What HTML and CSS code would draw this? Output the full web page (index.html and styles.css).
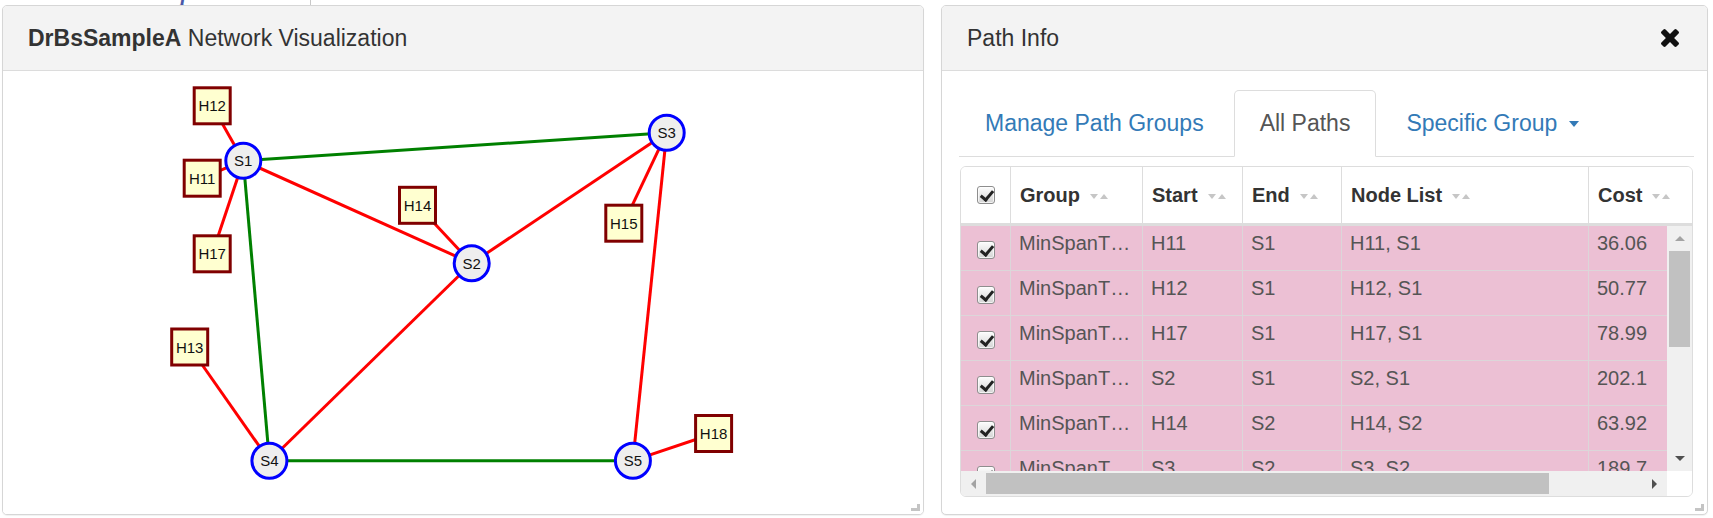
FILE: index.html
```html
<!DOCTYPE html>
<html lang="en">
<head>
<meta charset="utf-8">
<title>DrBsSampleA Network Visualization</title>
<link rel="stylesheet" href="styles.css">
</head>
<body>
<div class="logo-strip"><div class="logo"><span>DrBsSampleA Network</span></div></div>
<div class="main">
  <section class="panel panel-graph">
    <header class="panel-heading">
      <h3 class="panel-title"><b>DrBsSampleA</b> Network Visualization</h3>
    </header>
    <div class="graph-body">
      <svg class="graph" width="920" height="443" viewBox="3 71 920 443" xmlns="http://www.w3.org/2000/svg">
        <g class="edges">
          <line class="e-red" x1="212.2" y1="105.8" x2="243.3" y2="160.7"/>
          <line class="e-red" x1="202.2" y1="178.2" x2="243.3" y2="160.7"/>
          <line class="e-red" x1="212.2" y1="253.8" x2="243.3" y2="160.7"/>
          <line class="e-green" x1="243.3" y1="160.7" x2="666.7" y2="132.7"/>
          <line class="e-red" x1="243.3" y1="160.7" x2="471.7" y2="263.3"/>
          <line class="e-green" x1="243.3" y1="160.7" x2="269.4" y2="460.7"/>
          <line class="e-red" x1="417.5" y1="205.3" x2="471.7" y2="263.3"/>
          <line class="e-red" x1="471.7" y1="263.3" x2="666.7" y2="132.7"/>
          <line class="e-red" x1="471.7" y1="263.3" x2="269.4" y2="460.7"/>
          <line class="e-red" x1="623.8" y1="223.2" x2="666.7" y2="132.7"/>
          <line class="e-red" x1="666.7" y1="132.7" x2="632.9" y2="460.7"/>
          <line class="e-red" x1="189.7" y1="347" x2="269.4" y2="460.7"/>
          <line class="e-green" x1="269.4" y1="460.7" x2="632.9" y2="460.7"/>
          <line class="e-red" x1="713.6" y1="433.5" x2="632.9" y2="460.7"/>
        </g>
        <g class="hosts">
          <rect x="194.2" y="87.8" width="36" height="36"/><text x="212.2" y="105.8">H12</text>
          <rect x="184.2" y="160.2" width="36" height="36"/><text x="202.2" y="178.2">H11</text>
          <rect x="194.2" y="235.8" width="36" height="36"/><text x="212.2" y="253.8">H17</text>
          <rect x="399.5" y="187.3" width="36" height="36"/><text x="417.5" y="205.3">H14</text>
          <rect x="605.8" y="205.2" width="36" height="36"/><text x="623.8" y="223.2">H15</text>
          <rect x="171.7" y="329" width="36" height="36"/><text x="189.7" y="347">H13</text>
          <rect x="695.6" y="415.5" width="36" height="36"/><text x="713.6" y="433.5">H18</text>
        </g>
        <g class="switches">
          <circle cx="243.3" cy="160.7" r="17.5"/><text x="243.3" y="160.7">S1</text>
          <circle cx="471.7" cy="263.3" r="17.5"/><text x="471.7" y="263.3">S2</text>
          <circle cx="666.7" cy="132.7" r="17.5"/><text x="666.7" y="132.7">S3</text>
          <circle cx="269.4" cy="460.7" r="17.5"/><text x="269.4" y="460.7">S4</text>
          <circle cx="632.9" cy="460.7" r="17.5"/><text x="632.9" y="460.7">S5</text>
        </g>
      </svg>
    </div>
    <span class="resize-handle"></span>
  </section>

  <section class="panel panel-paths">
    <header class="panel-heading">
      <h3 class="panel-title">Path Info</h3>
      <svg class="close-icon" width="18" height="18" viewBox="302 366 1188 1188" xmlns="http://www.w3.org/2000/svg"><path d="M1490 1322q0 40-28 68l-136 136q-28 28-68 28t-68-28l-294-294-294 294q-28 28-68 28t-68-28l-136-136q-28-28-28-68t28-68l294-294-294-294q-28-28-28-68t28-68l136-136q28-28 68-28t68 28l294 294 294-294q28-28 68-28t68 28l136 136q28 28 28 68t-28 68l-294 294 294 294q28 28 28 68z"/></svg>
    </header>
    <div class="paths-body">
      <ul class="nav-tabs">
        <li><a href="#">Manage Path Groups</a></li>
        <li class="active"><a href="#">All Paths</a></li>
        <li><a href="#">Specific Group<span class="caret"></span></a></li>
      </ul>
      <div class="grid">
        <div class="grid-head">
          <table class="tbl head-tbl">
            <colgroup><col class="c-cb"><col class="c-group"><col class="c-start"><col class="c-end"><col class="c-nodes"><col class="c-cost-h"></colgroup>
            <thead>
              <tr>
                <th class="cb-cell"><span class="cb checked"></span></th>
                <th>Group<span class="sort"></span></th>
                <th>Start<span class="sort"></span></th>
                <th>End<span class="sort"></span></th>
                <th>Node List<span class="sort"></span></th>
                <th>Cost<span class="sort"></span></th>
              </tr>
            </thead>
          </table>
        </div>
        <div class="grid-body">
          <table class="tbl body-tbl">
            <colgroup><col class="c-cb"><col class="c-group"><col class="c-start"><col class="c-end"><col class="c-nodes"><col class="c-cost"><col class="c-extra"></colgroup>
            <tbody>
              <tr><td class="cb-cell"><span class="cb checked"></span></td><td>MinSpanT…</td><td>H11</td><td>S1</td><td>H11, S1</td><td>36.06</td><td></td></tr>
              <tr><td class="cb-cell"><span class="cb checked"></span></td><td>MinSpanT…</td><td>H12</td><td>S1</td><td>H12, S1</td><td>50.77</td><td></td></tr>
              <tr><td class="cb-cell"><span class="cb checked"></span></td><td>MinSpanT…</td><td>H17</td><td>S1</td><td>H17, S1</td><td>78.99</td><td></td></tr>
              <tr><td class="cb-cell"><span class="cb checked"></span></td><td>MinSpanT…</td><td>S2</td><td>S1</td><td>S2, S1</td><td>202.1</td><td></td></tr>
              <tr><td class="cb-cell"><span class="cb checked"></span></td><td>MinSpanT…</td><td>H14</td><td>S2</td><td>H14, S2</td><td>63.92</td><td></td></tr>
              <tr><td class="cb-cell"><span class="cb checked"></span></td><td>MinSpanT…</td><td>S3</td><td>S2</td><td>S3, S2</td><td>189.7</td><td></td></tr>
            </tbody>
          </table>
        </div>
        <div class="vscroll">
          <span class="sb-btn"><i class="arr arr-up"></i></span>
          <span class="v-thumb"></span>
          <span class="sb-fill"></span>
          <span class="sb-btn"><i class="arr arr-down"></i></span>
        </div>
        <div class="hscroll">
          <span class="sb-btn"><i class="arr arr-left"></i></span>
          <span class="h-thumb"></span>
          <span class="sb-fill"></span>
          <span class="sb-btn"><i class="arr arr-right"></i></span>
        </div>
        <div class="sb-corner"></div>
      </div>
    </div>
    <span class="resize-handle"></span>
  </section>
</div>
</body>
</html>
```

FILE: styles.css
```css
* { box-sizing: border-box; }
html, body { margin: 0; padding: 0; background: #fff; }
body {
  font-family: "Liberation Sans", Arial, sans-serif;
  color: #333;
  width: 1713px;
  height: 518px;
  overflow: hidden;
}

/* clipped logo peeking at the top */
.logo-strip { height: 5px; overflow: hidden; }
.logo {
  width: 311px;
  height: 5px;
  border-right: 1px solid #c8c8c8;
  overflow: hidden;
}
.logo span {
  display: block;
  margin-top: -31px;
  margin-left: 22px;
  font: italic 34px "Liberation Serif", serif;
  color: #4a58a8;
  letter-spacing: 4px;
  white-space: nowrap;
}

.main {
  display: flex;
  gap: 17px;
  padding-left: 2px;
}

.panel {
  position: relative;
  height: 510px;
  border: 1px solid #d6d6d6;
  border-radius: 5px;
  background: #fff;
  box-shadow: 0 1px 1px rgba(0, 0, 0, 0.06);
  display: flex;
  flex-direction: column;
  overflow: hidden;
}
.panel-graph { width: 922px; }
.panel-paths { width: 767px; }

.panel-heading {
  flex: none;
  height: 65px;
  background: #f3f3f3;
  border-bottom: 1px solid #dcdcdc;
  display: flex;
  align-items: center;
  justify-content: space-between;
  padding: 0 28px 0 25px;
}
.panel-title {
  margin: 0;
  font-size: 23px;
  font-weight: normal;
  color: #333;
}
.panel-title b { font-weight: bold; }

.close-icon { display: block; fill: #111; }

.resize-handle {
  position: absolute;
  right: 3px;
  bottom: 3px;
  width: 9px;
  height: 7px;
  border-right: 3px solid #c4c4c4;
  border-bottom: 3px solid #c4c4c4;
}

/* graph */
.graph-body { flex: 1; background: #fff; }
.graph { display: block; }
.e-red { stroke: #ff0000; stroke-width: 3; }
.e-green { stroke: #008000; stroke-width: 3; }
.hosts rect { fill: #ffffd0; stroke: #800000; stroke-width: 3; }
.switches circle { fill: #eeeeee; stroke: #0000ff; stroke-width: 3; }
.graph text {
  font-family: "Liberation Sans", Arial, sans-serif;
  font-size: 15px;
  fill: #111;
  text-anchor: middle;
  dominant-baseline: central;
}

/* path info */
.paths-body {
  flex: 1;
  padding: 19px 13px 0 17px;
}
.nav-tabs {
  list-style: none;
  margin: 0;
  padding: 0;
  display: flex;
  border-bottom: 1px solid #dddddd;
}
.nav-tabs li { margin: 0 4px -1px 0; }
.nav-tabs a {
  display: flex;
  align-items: center;
  height: 67px;
  padding: 0 25px;
  border: 1px solid transparent;
  border-radius: 5px 5px 0 0;
  color: #337ab7;
  font-size: 23px;
  text-decoration: none;
}
.nav-tabs li.active a {
  color: #555;
  background: #fff;
  border-color: #dddddd #dddddd transparent;
}
.caret {
  display: inline-block;
  width: 0;
  height: 0;
  margin-left: 12px;
  border-top: 6px solid #337ab7;
  border-left: 5px solid transparent;
  border-right: 5px solid transparent;
}

.grid {
  margin: 9px 1px 0;
  border: 1px solid #dddddd;
  border-radius: 6px;
  overflow: hidden;
  display: grid;
  grid-template-columns: 706px 25px;
  grid-template-rows: 59px 245px 25px;
  font-size: 20px;
}
.grid-head {
  grid-column: 1 / 3;
  border-bottom: 3px solid #dddddd;
  background: #fff;
}
.tbl {
  table-layout: fixed;
  border-collapse: separate;
  border-spacing: 0;
}
.head-tbl { width: 731px; }
.body-tbl { width: 958px; }
.c-cb { width: 50px; }
.c-group { width: 132px; }
.c-start { width: 100px; }
.c-end { width: 99px; }
.c-nodes { width: 247px; }
.c-cost-h { width: 103px; }
.c-cost { width: 130px; }
.c-extra { width: 200px; }

.head-tbl th {
  height: 56px;
  padding: 0 8px 0 9px;
  text-align: left;
  font-weight: bold;
  color: #333;
  line-height: 22px;
  vertical-align: middle;
  white-space: nowrap;
  border-right: 1px solid #dddddd;
}
.head-tbl th:last-child { border-right: 0; }
.head-tbl th.cb-cell { text-align: center; padding: 4px 0 0; }

.sort {
  display: inline-flex;
  align-items: center;
  gap: 2px;
  margin-left: 10px;
  vertical-align: middle;
}
.sort::before,
.sort::after {
  content: "";
  display: block;
  width: 0;
  height: 0;
  border-left: 4.5px solid transparent;
  border-right: 4.5px solid transparent;
}
.sort::before { border-top: 5px solid #c6c6c6; }
.sort::after { border-bottom: 5px solid #c6c6c6; }

.grid-body {
  overflow: hidden;
  background: #fff;
}
.body-tbl td {
  height: 45px;
  padding: 6px 8px 0;
  line-height: 22px;
  vertical-align: top;
  white-space: nowrap;
  overflow: hidden;
  color: #555;
  background: #ecc0d4;
  border-right: 1px solid #dcd6d9;
  border-bottom: 1px solid #dcd6d9;
}
.body-tbl td.cb-cell { text-align: center; padding: 15px 0 0; }

.cb {
  display: inline-block;
  vertical-align: top;
  width: 18px;
  height: 18px;
  border: 1px solid #8e8e8e;
  border-radius: 3px;
  background: linear-gradient(#fdfdfd, #d4d4d4);
  box-shadow: inset 0 0 0 1px rgba(255, 255, 255, 0.7);
  position: relative;
}
.cb.checked::after {
  content: "";
  position: absolute;
  left: 5px;
  top: 1px;
  width: 5px;
  height: 10px;
  border-right: 3px solid #222;
  border-bottom: 3px solid #222;
  transform: rotate(40deg);
}

.vscroll, .hscroll {
  background: #f0f0f0;
  display: flex;
}
.vscroll { flex-direction: column; }
.sb-btn {
  flex: none;
  width: 25px;
  height: 25px;
  display: flex;
  align-items: center;
  justify-content: center;
}
.sb-fill { flex: 1; }
.v-thumb {
  flex: none;
  height: 96px;
  margin: 0 2px;
  background: #c1c1c1;
}
.h-thumb {
  flex: none;
  width: 563px;
  margin: 2px 0;
  background: #c1c1c1;
}
.arr { display: block; width: 0; height: 0; }
.arr-up { border-left: 5px solid transparent; border-right: 5px solid transparent; border-bottom: 5px solid #a3a3a3; }
.arr-down { border-left: 5px solid transparent; border-right: 5px solid transparent; border-top: 5px solid #505050; }
.arr-left { border-top: 5px solid transparent; border-bottom: 5px solid transparent; border-right: 5px solid #a3a3a3; }
.arr-right { border-top: 5px solid transparent; border-bottom: 5px solid transparent; border-left: 5px solid #505050; }
.sb-corner { background: #fff; }
```
